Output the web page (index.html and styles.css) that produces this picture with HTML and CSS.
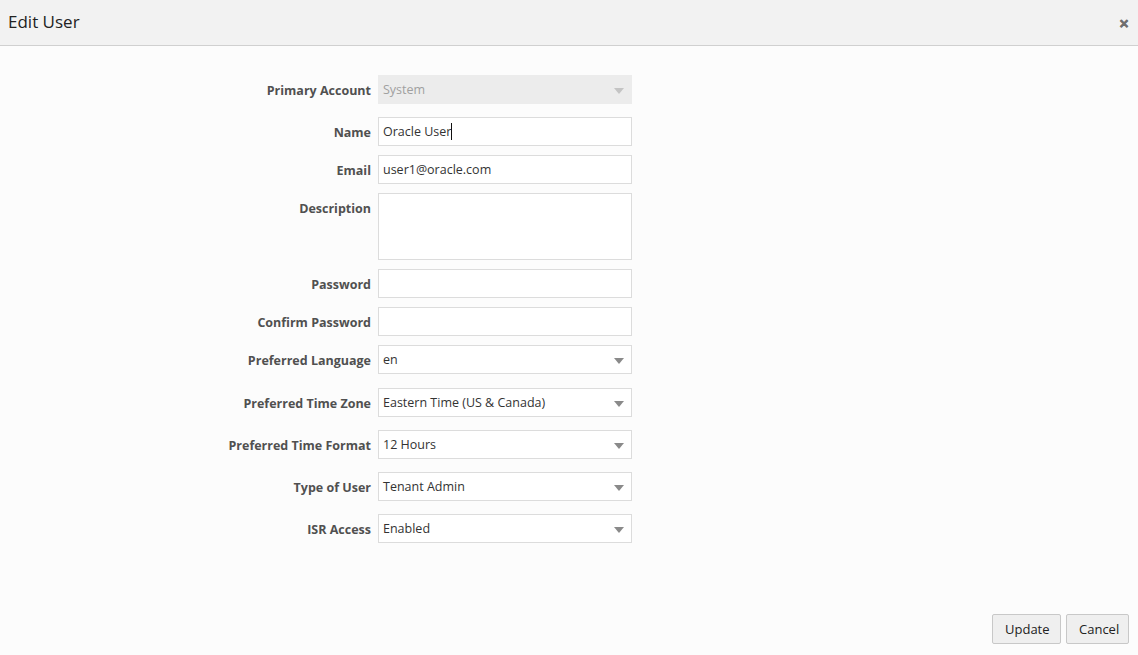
FILE: index.html
```html
<!DOCTYPE html>
<html>
<head>
<meta charset="utf-8">
<link rel="stylesheet" href="styles.css">
</head>
<body>
<div class="dialog">
  <div class="header">
    <span class="title">Edit User</span>
    <span class="close">&#x2715;</span>
  </div>
  <div class="body">
    <div class="form">
      <div class="row r-first">
        <label class="lbl">Primary Account</label>
        <div class="field select disabled"><span class="val">System</span><span class="arrow"></span></div>
      </div>
      <div class="row r-gap13">
        <label class="lbl">Name</label>
        <div class="field"><span class="val">Oracle User</span><span class="caret"></span></div>
      </div>
      <div class="row r-gap9">
        <label class="lbl">Email</label>
        <div class="field"><span class="val">user1@oracle.com</span></div>
      </div>
      <div class="row r-gap9">
        <label class="lbl">Description</label>
        <div class="field area"></div>
      </div>
      <div class="row r-gap9">
        <label class="lbl">Password</label>
        <div class="field"></div>
      </div>
      <div class="row r-gap9">
        <label class="lbl">Confirm Password</label>
        <div class="field"></div>
      </div>
      <div class="row r-gap9">
        <label class="lbl">Preferred Language</label>
        <div class="field select"><span class="val">en</span><span class="arrow"></span></div>
      </div>
      <div class="row r-gap14">
        <label class="lbl">Preferred Time Zone</label>
        <div class="field select"><span class="val">Eastern Time (US &amp; Canada)</span><span class="arrow"></span></div>
      </div>
      <div class="row r-gap13">
        <label class="lbl">Preferred Time Format</label>
        <div class="field select"><span class="val">12 Hours</span><span class="arrow"></span></div>
      </div>
      <div class="row r-gap13">
        <label class="lbl">Type of User</label>
        <div class="field select"><span class="val">Tenant Admin</span><span class="arrow"></span></div>
      </div>
      <div class="row r-gap13">
        <label class="lbl">ISR Access</label>
        <div class="field select"><span class="val">Enabled</span><span class="arrow"></span></div>
      </div>
    </div>
    <div class="footer">
      <button class="btn btn-update">Update</button>
      <button class="btn btn-cancel">Cancel</button>
    </div>
  </div>
</div>
</body>
</html>
```
FILE: styles.css
```css
* { box-sizing: border-box; }
html, body { margin: 0; padding: 0; }
body {
  width: 1138px;
  height: 655px;
  background: #fcfcfc;
  font-family: "Open Sans", "Noto Sans", sans-serif;
  overflow: hidden;
}
.dialog { display: flex; flex-direction: column; height: 655px; }
.header {
  height: 46px;
  background: #f2f2f2;
  border-bottom: 1px solid #d0d0d0;
  display: flex;
  align-items: center;
  justify-content: space-between;
  padding: 0 9px 0 8px;
}
.title { font-size: 17px; color: #222; padding-bottom: 3px; }
.close { font-size: 12px; color: #6f6f6f; font-weight: bold; margin-top: 2px; -webkit-text-stroke: 0.6px #6f6f6f; }
.body { flex: 1; display: flex; flex-direction: column; }
.form { padding-left: 207px; display: flex; flex-direction: column; }
.row { display: flex; align-items: flex-start; }
.r-first { margin-top: 29px; }
.r-gap9 { margin-top: 9px; }
.r-gap13 { margin-top: 13px; }
.r-gap14 { margin-top: 14px; }
.lbl {
  width: 171px;
  height: 29px;
  text-align: right;
  padding-right: 7px;
  padding-top: 1px;
  font-size: 12.5px;
  font-weight: bold;
  color: #505050;
  line-height: 29px;
  white-space: nowrap;
}
.field {
  width: 254px;
  height: 29px;
  border: 1px solid #dcdcdc;
  background: #fff;
  display: flex;
  align-items: center;
  padding: 0 4px;
  font-size: 12.5px;
  color: #333;
  position: relative;
}
.field.area { height: 67px; }
.field.disabled { background: #ececec; border-color: #ececec; color: #a0a0a0; }
.val { white-space: nowrap; }
.caret { display: inline-block; width: 1px; height: 17px; background: #111; margin-left: 0; }
.arrow {
  position: absolute;
  right: 7px;
  top: 12px;
  width: 0; height: 0;
  border-left: 5px solid transparent;
  border-right: 5px solid transparent;
  border-top: 6px solid #8a8a8a;
}
.field.disabled .arrow { border-top-color: #c4c4c4; }
.footer {
  margin-top: auto;
  display: flex;
  justify-content: flex-end;
  gap: 5px;
  padding: 0 9px 11px 0;
}
.btn {
  height: 30px;
  border: 1px solid #c8c8c8;
  background: #efefef;
  border-radius: 2px;
  font-family: "Open Sans", "Noto Sans", sans-serif;
  font-size: 13px;
  color: #222;
  padding: 0 12px;
}
.btn-update { width: 69px; }
.btn-cancel { width: 63px; }
```
